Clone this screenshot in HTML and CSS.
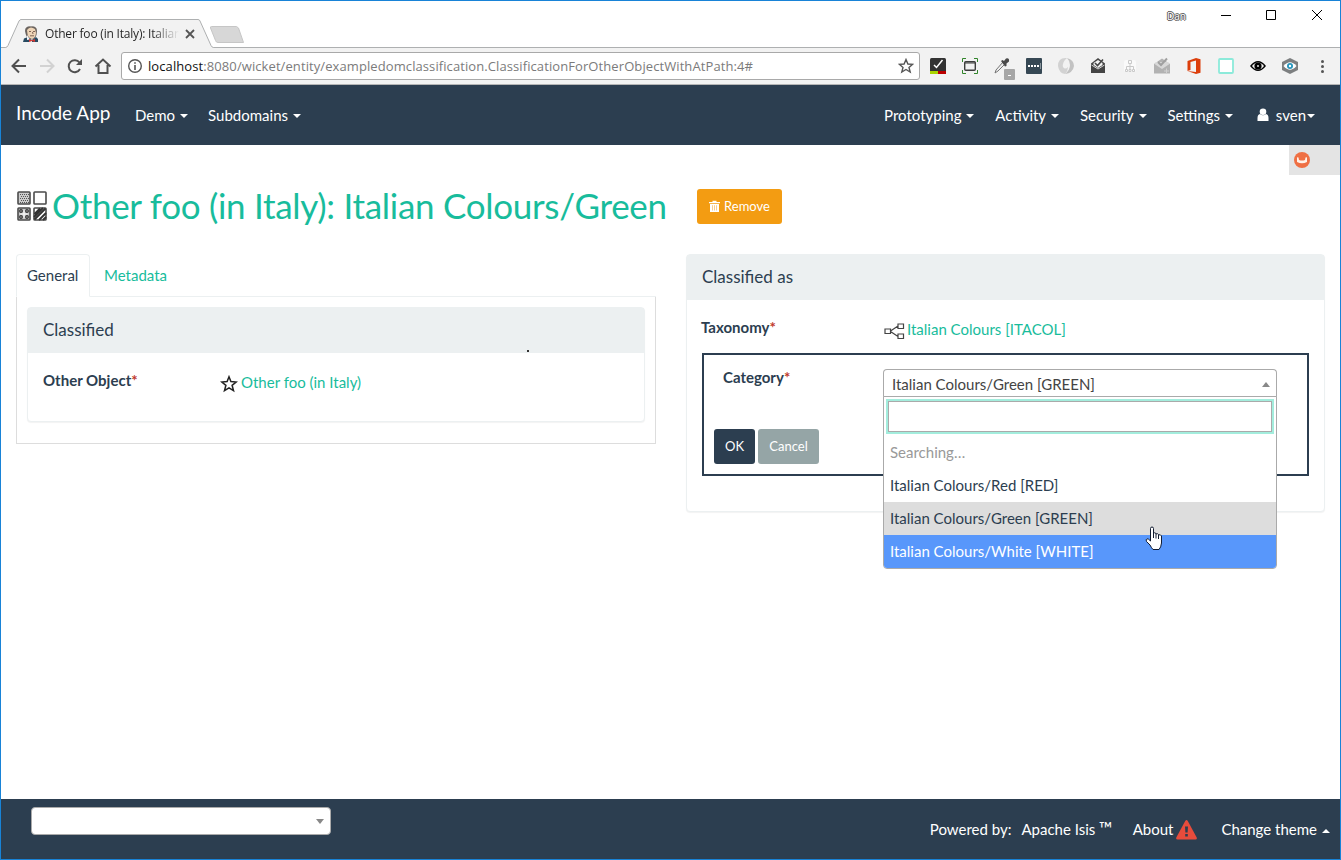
FILE: index.html
```html
<!DOCTYPE html>
<html lang="en">
<head>
<meta charset="utf-8">
<title>Other foo (in Italy): Italian Colours/Green</title>
<link rel="stylesheet" href="styles.css">
</head>
<body>
<div class="window">
  <div class="titlebar">
    <svg class="tab-shape" width="260" height="47" viewBox="1 1 260 47"><path d="M1 47.5H5.500Q7 47.500 8 45.500L19 21Q20 19.500 21 19.500H198Q199.500 19.500 200 21L211 45.500Q212 47.500 213.500 47.500H261V48H1Z" fill="#f2f2f2"/><path d="M1 47.500H5.500Q7 47.500 8 45.500L19 21Q20 19.500 21 19.500H198Q199.500 19.500 200 21L211 45.500Q212 47.500 213.500 47.500H261" fill="none" stroke="#aeb0b1"/><path d="M211.500 26.500H236.500L238.500 28L243.500 42.500H218Q216 42.500 215.500 40.500L210.500 28Q210 26.500 211.500 26.500Z" fill="#d7d7d7" stroke="#c6c6c6"/></svg>
    <div class="tab">
      <svg width="16" height="16" viewBox="0 0 16 16"><path d="M2 5Q2 0 8 .4Q14 0 14 5L13.500 9Q12 13 9 13.500H6Q3 11 2 5Z" fill="#6b645f"/><path d="M4 4Q7-.5 12 3L13 7Q12.500 12 9 13Q5 12 4.500 8Z" fill="#efd5b7"/><path d="M6 5.500H8M10 5.500H12M7 9.800H11M9.500 6L10 8" stroke="#74594a" stroke-width=".9" fill="none"/><path d="M0 16L1 12.500L5 11L9 14L13 11L15 13V16Z" fill="#284a61"/><path d="M4 9L6 12L7 13.500L4 14ZM6 14L9 13.500V16H6Z" fill="#f5f5f5"/><path d="M6 13L9 14.200L12 13V16L9 15L6 16Z" fill="#d33833"/></svg>
      <span class="tab-title">Other foo (in Italy): Italian</span>
      <svg width="10" height="10" viewBox="0 0 10 10"><path d="M1 1L9 9M9 1L1 9" stroke="#555" stroke-width="1.800"/></svg>
    </div>
    <div class="controls">
      <span class="profile">Dan</span>
      <svg width="106" height="14" viewBox="0 0 106 14"><path d="M0 7.500H10M45.500 2.500H54.500V11.500H45.500ZM91 2L101 12M101 2L91 12" fill="none" stroke="#000"/></svg>
    </div>
  </div>
  <div class="toolbar">
    <svg class="nav-icons" width="112" height="36" viewBox="1 48 112 36" fill="none" stroke="#505050" stroke-width="2"><path d="M26 66H13M19 59.500L12.500 66L19 72.500"/><path d="M40 66H53M47 59.500L53.500 66L47 72.500" stroke="#d2d2d2"/><path d="M79.500 62.500A6 6 0 1 0 80 69"/><path d="M82 59V65H76Z" fill="#505050" stroke="none"/><path d="M95.500 66.500L103 59.500L110.500 66.500M98.500 65V73H107.500V65"/></svg>
    <div class="address">
      <svg width="16" height="16" viewBox="0 0 16 16"><circle cx="8" cy="8" r="6.300" fill="none" stroke="#555" stroke-width="1.400"/><path d="M7.200 4.200H8.800V5.800H7.200ZM7.200 7H8.800V12H7.200Z" fill="#555"/></svg>
      <span class="url"><b>localhost</b>:8080/wicket/entity/exampledomclassification.ClassificationForOtherObjectWithAtPath:4#</span>
      <svg width="16" height="16" viewBox="0 0 16 16"><path d="M8 1.500L9.900 6L14.700 6.300L11 9.400L12.200 14.100L8 11.500L3.800 14.100L5 9.400L1.300 6.300L6.100 6Z" fill="none" stroke="#555" stroke-width="1.400"/></svg>
    </div>
    <div class="extensions">
      <svg width="32" height="36" viewBox="0 0 32 36"><rect x="8" y="10" width="16" height="16" rx="1.500" fill="#333"/><path d="M8 23H16V26H8Z" fill="#a9d400"/><path d="M16 23H24V26H16Z" fill="#b00"/><path d="M12 17L14.500 19.500L20.500 12" stroke="#fff" stroke-width="1.500" fill="none"/></svg>
      <svg width="32" height="36" viewBox="0 0 32 36"><path d="M8.500 14V10.500H12M20 10.500H23.500V14M23.500 22V25.500H20M12 25.500H8.500V22" fill="none" stroke="#31852b"/><rect x="10.700" y="13.700" width="10.600" height="8.600" rx="1" fill="none" stroke="#3d3d3d" stroke-width="1.400"/><path d="M11 15H21" stroke="#3d3d3d"/></svg>
      <svg width="32" height="36" viewBox="0 0 32 36"><path d="M9 25L10 22L17 14L19 16L12 23Z" fill="#eee" stroke="#777"/><path d="M15 13L16.500 12L18 13L20 10.500Q23.500 9.500 23 13.500L20.500 15.500V18L19 18.500Z" fill="#4a4a4a"/><rect x="18" y="21" width="11" height="11" rx="1" fill="#a6a6a6"/><path d="M22 27.500H25" stroke="#fff"/></svg>
      <svg width="32" height="36" viewBox="0 0 32 36"><rect x="8" y="10" width="16" height="16" rx="1" fill="#364854"/><path d="M10 17H12V19H10ZM13 17H15V19H13ZM16 17H18V19H16ZM19 17H21V19H19Z" fill="#fff"/><path d="M22.500 15V21" stroke="#8a969d"/></svg>
      <svg width="32" height="36" viewBox="0 0 32 36"><path d="M17 10Q8 9 8 18Q9 25 15 26Q18 23 18 19Q15 22 13 19Q12 14 17 10Z" fill="#d2d2d2"/><path d="M17 10Q24 12 24 18Q23 25 15 26Q20 22 20 17Q20 13 17 10Z" fill="#c2c2c2"/></svg>
      <svg width="32" height="36" viewBox="0 0 32 36"><path d="M9 15.500L16 10L23 15.500V25H9Z" fill="#444"/><path d="M11.500 15L16 12L20.500 15V17L16 20L11.500 17Z" fill="#f2f2f2"/><path d="M13 15L15.500 17.500L21 11.500" stroke="#444" stroke-width="1.600" fill="none"/><path d="M9.500 17L16 21L22.500 17" fill="none" stroke="#d2d2d2"/></svg>
      <svg width="32" height="36" viewBox="0 0 32 36"><rect x="10" y="12" width="12" height="12" rx="2" fill="#fafafa"/><path d="M14.500 12.500H17.500V15.500H14.500ZM16 15.500V22M12.500 22V18.500H19.500V22M11.500 21.500H13.500V23.500H11.500ZM15 21.500H17V23.500H15ZM18.500 21.500H20.500V23.500H18.500Z" fill="none" stroke="#c9c9c9"/></svg>
      <svg width="32" height="36" viewBox="0 0 32 36"><path d="M8 16L16 10.500L24 16V25.500H8Z" fill="#b2b2b2"/><path d="M8.500 16L16 21L23.500 16L22 14H10Z" fill="#d8d8d8"/><path d="M12 14L15 17L21 10.500" stroke="#a0a0a0" stroke-width="2" fill="none"/><path d="M18 23H23M20.500 20.500V25.500" stroke="#d0d0d0"/></svg>
      <svg width="32" height="36" viewBox="0 0 32 36"><path d="M9.500 13L18 10L22.500 11.300V24.800L18 26L9.500 23L18 24V12.500L12.500 14V22L9.500 23Z" fill="#dc3e0b"/></svg>
      <svg width="32" height="36" viewBox="0 0 32 36"><rect x="9" y="11" width="14" height="14" rx="1" fill="#fff" stroke="#8ceada" stroke-width="1.800"/></svg>
      <svg width="32" height="36" viewBox="0 0 32 36"><path d="M8 18Q16 8 24 18Q16 28 8 18Z" fill="#000"/><path d="M10 18Q12.500 14.500 16 14.500Q19.500 14.500 22 18Q19.500 21.500 16 21.500Q12.500 21.500 10 18Z" fill="#f2f2f2"/><circle cx="16" cy="18" r="3.600"/><circle cx="16" cy="18" r="1" fill="#ddd"/></svg>
      <svg width="32" height="36" viewBox="0 0 32 36"><path d="M16 10L24 14V22L16 26L8 22V14Z" fill="#7d7f80"/><path d="M9.500 18Q16 10.500 22.500 18Q16 25.500 9.500 18Z" fill="#fff"/><circle cx="16" cy="18" r="3" fill="#2796bd"/><circle cx="16" cy="18" r="1.200" fill="#fff"/></svg>
      <svg width="32" height="36" viewBox="0 0 32 36" fill="#555"><circle cx="16.500" cy="13.500" r="1.500"/><circle cx="16.500" cy="18.500" r="1.500"/><circle cx="16.500" cy="23.500" r="1.500"/></svg>
    </div>
  </div>

  <nav class="navbar">
    <span class="brand">Incode App</span>
    <span class="nav-item">Demo<i class="caret"></i></span>
    <span class="nav-item">Subdomains<i class="caret"></i></span>
    <div class="nav-right">
      <span class="nav-item">Prototyping<i class="caret"></i></span>
      <span class="nav-item">Activity<i class="caret"></i></span>
      <span class="nav-item">Security<i class="caret"></i></span>
      <span class="nav-item">Settings<i class="caret"></i></span>
      <span class="nav-item user"><svg width="12" height="14" viewBox="0 0 12 14"><circle cx="6" cy="3.700" r="3.300" fill="#fff"/><path d="M.5 13V10Q.5 6.500 3 6Q6 8.500 9 6Q11.500 6.500 11.500 10V13Z" fill="#fff"/></svg>sven<i class="caret"></i></span>
    </div>
  </nav>

  <main class="page">
    <div class="bookmark"><svg width="16" height="16" viewBox="0 0 16 16"><circle cx="8" cy="8" r="8" fill="#ef6f43"/><path d="M3 5.500Q3.800 5 4.500 5.500L5 8Q8 9 11 8L11.500 5.500Q12.300 5 13 5.500V10Q8 12.500 3 10Z" fill="#fff2e9"/></svg></div>
    <header class="heading">
      <svg class="heading-icon" width="30" height="30" viewBox="0 0 30 30">
        <g fill="#fff" stroke="#4b4b4b" stroke-width="1.600"><rect x="1" y="1" width="12" height="12" rx=".8" fill="#ccc"/><rect x="17" y="1" width="12" height="12" rx=".8"/><rect x="1" y="17" width="12" height="12" rx=".8" fill="#ccc"/><rect x="17" y="17" width="12" height="12" rx=".8"/></g>
        <path d="M3 3.500H12M4 5.500H12M3 7.500H12M4 9.500H12M3 11.500H12" stroke="#555" stroke-width="1" stroke-dasharray="1 1"/>
        <g fill="none" stroke="#333" stroke-width="1.300"><circle cx="4" cy="20" r="1.300"/><circle cx="10" cy="20" r="1.300"/><circle cx="4" cy="26" r="1.300"/><circle cx="10" cy="26" r="1.300"/></g>
        <path d="M3.500 23H10.500M7 19.500V26.500" stroke="#fff"/>
        <path d="M17.500 23L23 17.500M17.500 28.500L28.500 17.500M22 29L29 22M26 29L29 26M17 26L26 17" stroke="#333" stroke-width="1.900"/>
      </svg>
      <h1>Other foo (in Italy): Italian Colours/Green</h1>
      <button class="btn btn-remove"><svg width="11" height="12" viewBox="0 0 11 12"><path d="M3.500 2V.7H7.500V2H11V3.300H0V2ZM1 4H10V12H1Z" fill="#fff"/><path d="M3.500 5.200V10.500M5.500 5.200V10.500M7.500 5.200V10.500" stroke="#f7c273" stroke-width=".8"/></svg>Remove</button>
    </header>
    <div class="columns">
      <section class="left">
        <div class="tabs"><span class="tab-active">General</span><span class="tab-link">Metadata</span></div>
        <div class="tab-content">
          <div class="panel">
            <h2 class="panel-heading">Classified</h2>
            <div class="panel-body">
              <div class="field"><span class="label">Other Object<em>*</em></span><span class="value"><svg width="18" height="18" viewBox="0 0 18 18"><path d="M9 1.800L10.900 6.600L16.200 7L12.100 10.300L13.500 15.700L9 12.800L4.500 15.700L5.900 10.300L1.800 7L7.100 6.600Z" fill="none" stroke="#222" stroke-width="1.500"/></svg>Other foo (in Italy)</span></div>
            </div>
          </div>
        </div>
      </section>
      <section class="panel right">
        <h2 class="panel-heading">Classified as</h2>
        <div class="taxonomy"><span class="label">Taxonomy<em>*</em></span><span class="value"><svg width="21" height="17" viewBox="0 0 21 17"><path d="M1 6H6.500V10.500H1ZM14 1H19.500V5.500H14ZM14 11H19.500V15.500H14ZM6.500 8L14 3M6.500 8.500L14 13.500" fill="none" stroke="#444" stroke-width="1.200"/></svg>Italian Colours [ITACOL]</span></div>
        <div class="editor">
          <div class="editor-form">
            <span class="label category">Category<em>*</em></span>
            <div class="buttons"><button class="btn btn-ok">OK</button><button class="btn btn-cancel">Cancel</button></div>
          </div>
          <div class="select">
            <div class="select-value"><span>Italian Colours/Green [GREEN]</span><i class="arrow-up"></i></div>
            <div class="dropdown">
              <div class="search"></div>
              <div class="option muted">Searching…</div>
              <div class="option">Italian Colours/Red [RED]</div>
              <div class="option selected">Italian Colours/Green [GREEN]</div>
              <div class="option active">Italian Colours/White [WHITE]</div>
            </div>
          </div>
        </div>
      </section>
    </div>
  </main>

  <footer class="footer">
    <div class="footer-select"><i class="arrow-down"></i></div>
    <div class="footer-links">
      <span class="powered">Powered by:</span><span class="isis">Apache Isis <span class="tm">™</span></span><span class="about">About</span>
      <svg class="warn" width="21" height="20" viewBox="0 0 21 20"><path d="M9.200 1Q10.500-.8 11.800 1L20.700 17.500Q21.300 19.500 19.500 19.500H1.500Q-.3 19.500 .3 17.500Z" fill="#e74c3c"/><path d="M9 6.500H12L11.600 12.500H9.400ZM9.200 14H11.800V16.500H9.200Z" fill="#2c3e50"/></svg>
      <span class="theme">Change theme<i class="caret up"></i></span>
    </div>
  </footer>
  <i class="speck"></i>
  <svg class="pointer" width="18" height="25" viewBox="0 0 18 25"><path d="M5.500 14V2.500Q5.500 1 7 1Q8.500 1 8.500 2.500V7.500Q9.500 6 11 7.500V8Q12.500 7 13.500 8.500V9Q15.500 8 16.500 10V17Q16 21.500 14 23.500H8Q6.500 22 5 19L1.500 15.500Q.5 13.500 2 12.800Q3.300 12.500 5.500 15Z" fill="#fff" stroke="#111b30"/><path d="M8.500 7V12M11 8V12.500M13.500 9V13" stroke="#111b30"/></svg>
</div>
</body>
</html>
```
FILE: styles.css
```css
* { box-sizing: border-box; }
body { margin: 0; background: #fff; color: #2c3e50; font: 15px/21px Lato, sans-serif; }
h1, h2 { margin: 0; font-weight: 400; }
em { color: #c0392b; font-style: normal; font-weight: 700; }
svg { flex: none; display: block; }
.window { position: relative; display: flex; flex-direction: column; width: 1341px; height: 860px; border: 1px solid #1883d7; overflow: hidden; }

.titlebar { position: relative; flex: none; display: flex; justify-content: space-between; height: 47px; border-bottom: 1px solid #aeb0b1; font-family: "Open Sans", sans-serif; }
.tab-shape { position: absolute; left: 0; top: 0; }
.tab { position: relative; display: flex; align-items: center; height: 29px; margin: 18px 0 0 22px; }
.tab-title { width: 134px; margin: 0 6px 0 6px; white-space: nowrap; font-size: 12px; letter-spacing: -.2px; color: transparent; background: linear-gradient(90deg, #222 80%, transparent 100%); background-clip: text; -webkit-background-clip: text; }
.controls { display: flex; align-items: flex-start; gap: 35px; padding: 7px 13px 0 0; }
.profile { margin-top: -2px; font-size: 10px; color: #fff; text-shadow: 1px 0 #555, -1px 0 #555, 0 1px #555, 0 -1px #555; }

.toolbar { flex: none; display: flex; height: 37px; background: #f2f2f2; border-bottom: 1px solid #b5b5b5; }
.address { display: flex; align-items: center; width: 799px; height: 28px; margin: 4px 2px 0 8px; padding: 0 5px; border: 1px solid #a9a9a9; border-radius: 3px; background: #fff; }
.url { flex: 1; margin-left: 5px; font: 13px/20px "Open Sans", sans-serif; letter-spacing: .09px; color: #7b7b7b; white-space: nowrap; }
.url b { font-weight: 400; color: #111; }
.extensions { display: flex; }

.navbar { flex: none; display: flex; align-items: center; height: 60px; padding: 0 25px 0 15px; background: #2c3e50; color: #fff; }
.brand { width: 94px; margin: -6px 25px 0 0; font-size: 19px; white-space: nowrap; }
.nav-item { display: flex; align-items: center; margin-right: 20px; white-space: nowrap; }
.caret { width: 8px; margin: 2px 0 0 5px; border: 4px solid transparent; border-top-color: currentColor; border-bottom: 0; }
.caret.up { border-top: 0; border-bottom: 4px solid currentColor; }
.nav-right { display: flex; margin-left: auto; }
.nav-right .nav-item { margin-right: 20.8px; }
.nav-right .user { margin: 0 0 0 3px; }
.user svg { margin-right: 7px; }
.user .caret { margin-left: 1px; }

.page { position: relative; flex: 1; padding: 44px 15px 0; }
.bookmark { position: absolute; top: 0; right: 0; width: 51px; height: 30px; padding: 7px 5px; background: #e4e4e4; }
.heading { display: flex; height: 65px; }
.heading-icon { margin: 2px 5px 0 1px; }
.heading h1 { width: 645px; color: #18bc9c; font-size: 35px; letter-spacing: -.29px; line-height: 32px; white-space: nowrap; }
.btn { display: flex; align-items: center; justify-content: center; height: 35px; padding: 0 0 1px; border: 0; border-radius: 3px; color: #fff; font: 13px/18px Lato, sans-serif; }
.btn-remove { width: 85px; gap: 4px; background: #f39c12; }
.columns { display: flex; align-items: flex-start; gap: 30px; }
.left { width: 640px; }
.tabs { display: flex; height: 43px; border-bottom: 1px solid #ecf0f1; }
.tabs span { height: 43px; padding: 10px 10px; border: 1px solid transparent; }
.tab-active { width: 74px; background: #fff; }
.tabs .tab-active { border-color: #ecf0f1 #ecf0f1 #fff; border-radius: 4px 4px 0 0; }
.tab-link { margin-left: 3px; color: #18bc9c; }
.tab-content { height: 147px; padding: 10px; border: 1px solid #ddd; border-top: 0; }
.panel { border: 1px solid #ecf0f1; border-radius: 4px; background: #fff; box-shadow: 0 1px 1px rgba(0,0,0,.05); }
.tab-content .panel { height: 115px; }
.panel-heading { height: 45px; padding: 12px 15px; background: #ecf0f1; font-size: 17px; line-height: 20px; }
.field { display: flex; padding: 17px 15px; }
.label { font-weight: 700; }
.field .label { width: 177px; }
.value { display: flex; align-items: center; gap: 3px; margin-top: 2px; color: #18bc9c; }
.field .value svg { margin-top: 3px; }
.right { width: 639px; height: 258px; padding: 0 0 15px; }
.taxonomy { display: flex; align-items: flex-start; height: 53px; padding: 17px 14px 0; }
.taxonomy .label { width: 183px; }
.taxonomy .value { gap: 2px; }
.taxonomy .value svg { margin-top: 3px; }
.editor { display: flex; width: 607px; height: 123px; margin-left: 15px; border: 2px solid #2c3e50; }
.editor-form { width: 179px; padding: 12px 0 0 10px; }
.category { display: block; padding-left: 9px; }
.buttons { display: flex; gap: 3px; margin-top: 41px; }
.btn-ok { width: 41px; background: #2c3e50; }
.btn-cancel { width: 61px; background: #95a5a6; }
.select { position: relative; width: 394px; height: 28px; margin-top: 14px; }
.select-value { display: flex; justify-content: space-between; align-items: center; height: 28px; padding: 2px 6px 0 8px; border: 1px solid #aaa; border-bottom: 0; border-radius: 4px 4px 0 0; color: #444; }
.arrow-up { border: 4px solid transparent; border-top: 0; border-bottom: 5px solid #888; }
.dropdown { position: absolute; top: 27px; left: 0; width: 394px; height: 173px; padding-top: 4px; border: 1px solid #aaa; border-radius: 0 0 4px 4px; background: #fff; overflow: hidden; }
.search { height: 31px; margin: 0 4px 4px; border: 1px solid #aaa; box-shadow: 0 0 0 2px #a3eddd; }
.option { height: 33px; padding: 6px; }
.muted { color: #999; }
.selected { background: #ddd; }
.active { background: #5897fb; color: #fff; }

.footer { flex: none; display: flex; justify-content: space-between; height: 60px; padding: 8px 10px 0 30px; background: #2c3e50; color: #fff; }
.footer-select { display: flex; justify-content: flex-end; align-items: center; width: 300px; height: 28px; padding-right: 6px; border: 1px solid #aaa; border-radius: 4px; background: #fff; }
.arrow-down { border: 4px solid transparent; border-bottom: 0; border-top: 5px solid #888; }
.footer-links { display: flex; align-items: center; height: 45px; white-space: nowrap; }
.isis { margin: 0 20px 0 10px; }
.tm { font-size: 18px; line-height: 15px; }
.warn { margin: 0 24px 0 3px; }
.theme { display: flex; align-items: center; }
.speck { position: absolute; left: 526px; top: 349px; width: 2px; height: 2px; background: #333; }
.pointer { position: absolute; left: 1144px; top: 525px; }
```
